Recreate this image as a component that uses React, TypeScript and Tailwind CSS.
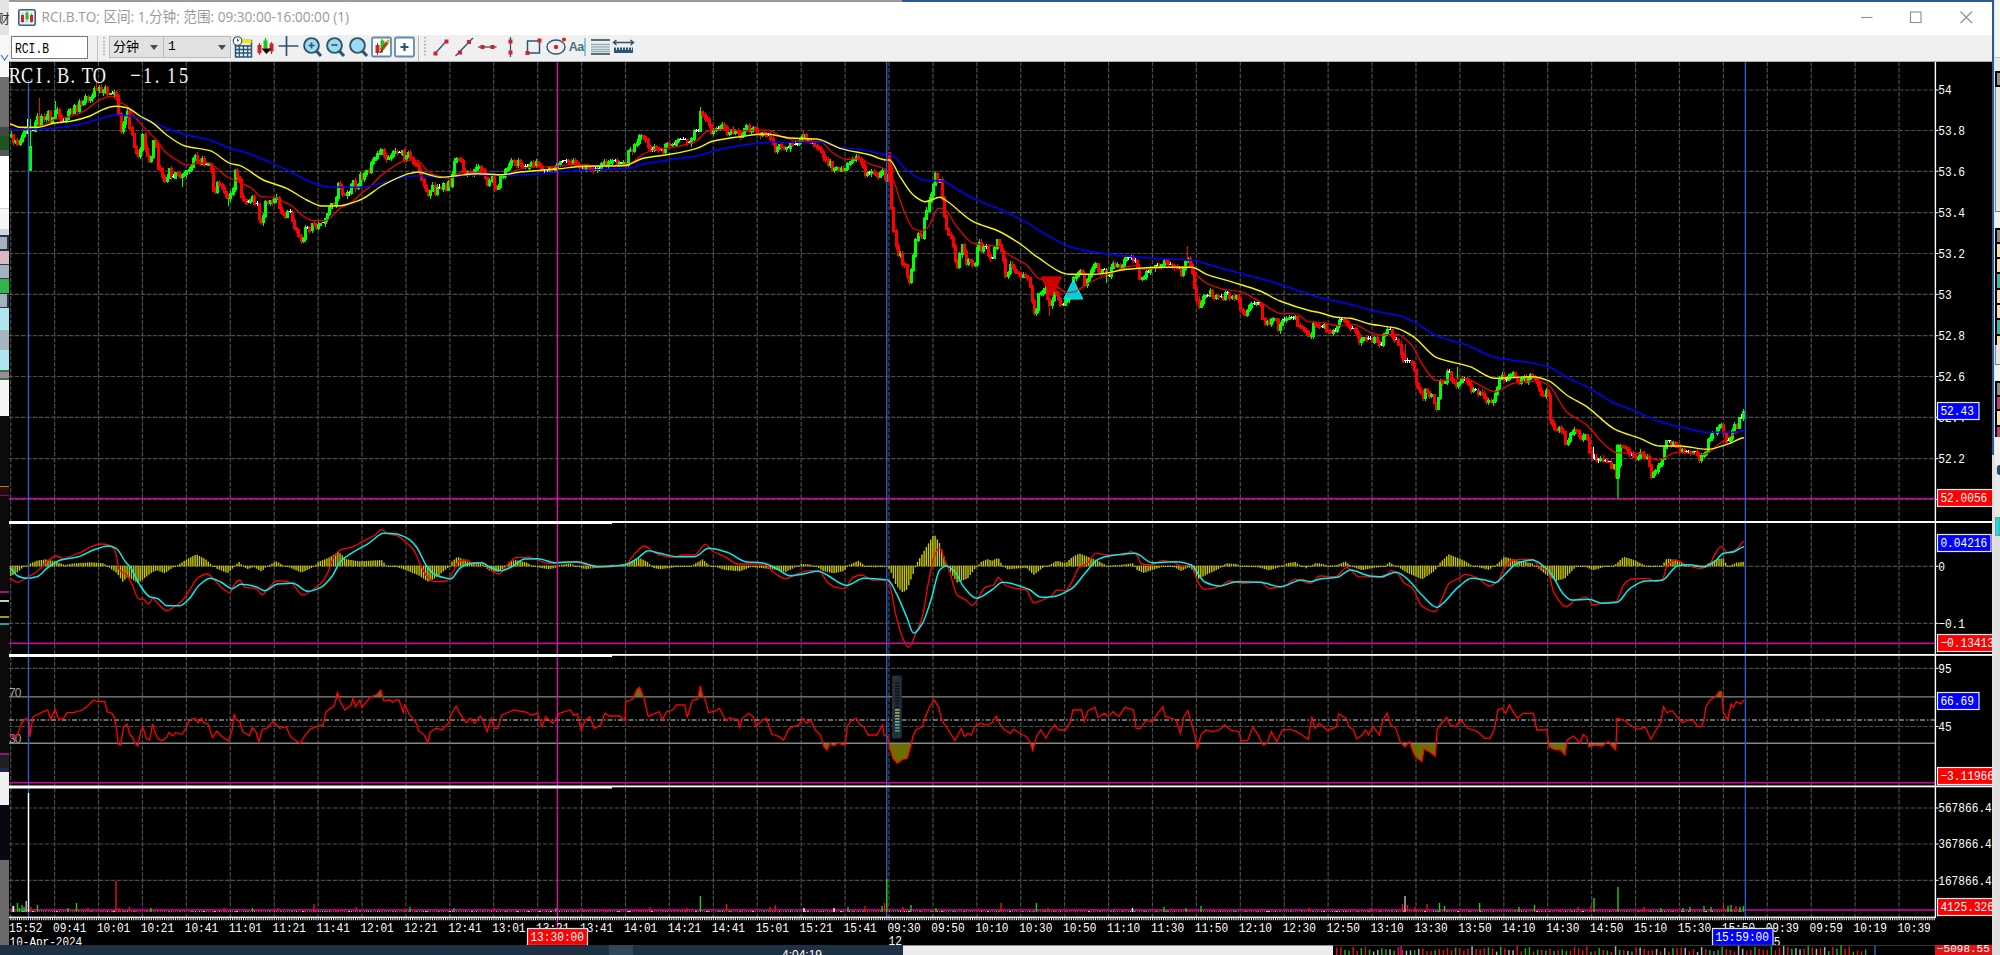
import React from "react";

type Pt = [number, number];
type Seg = [number, number, number, string];

const STEP = 2.19575;
const X0 = 10.7;
const GRID = 43.915;
const NBARS = 790;

const round = (n: number) => Math.round(n * 10) / 10;

function read(segs: Seg[]): Pt[] {
  const out: Pt[] = [];
  for (const [ox, oy, kx, data] of segs) {
    for (const pair of data.trim().split(/\s+/)) {
      const [a, b] = pair.split(",").map(Number);
      const x = ox + a / kx;
      if (out.length && x <= out[out.length - 1][0]) continue;
      out.push([x, oy + b / 3]);
    }
  }
  return out;
}

function sampler(pts: Pt[]) {
  return (x: number) => {
    if (x <= pts[0][0]) return pts[0][1];
    for (let i = 1; i < pts.length; i++) {
      if (x <= pts[i][0]) {
        const [xa, ya] = pts[i - 1];
        const [xb, yb] = pts[i];
        return ya + ((yb - ya) * (x - xa)) / (xb - xa);
      }
    }
    return pts[pts.length - 1][1];
  };
}

function noise(seed: number) {
  let s = seed;
  return () => {
    s = (s * 1664525 + 1013904223) % 4294967296;
    return s / 4294967296;
  };
}

const toPoints = (pts: Pt[]) => pts.map((p) => `${round(p[0])},${round(p[1])}`).join(" ");

function toCurve(pts: Pt[]) {
  const n = pts.length;
  const slope = pts.map((p, i) => {
    if (i === 0 || i === n - 1) return 0;
    const a = (p[1] - pts[i - 1][1]) / (p[0] - pts[i - 1][0]);
    const b = (pts[i + 1][1] - p[1]) / (pts[i + 1][0] - p[0]);
    return a * b <= 0 ? 0 : (2 * a * b) / (a + b);
  });
  let d = `M${round(pts[0][0])} ${round(pts[0][1])}`;
  for (let i = 1; i < n; i++) {
    const [xa, ya] = pts[i - 1];
    const [xb, yb] = pts[i];
    const t = (xb - xa) / 3;
    d += `C${round(xa + t)} ${round(ya + slope[i - 1] * t)} ${round(xb - t)} ${round(yb - slope[i] * t)} ${round(xb)} ${round(yb)}`;
  }
  return d;
}

const price = read([
  [0, 60, 3, "30,215 35,240 50,245 62,240 66,220 78,205 88,200 97,215 103,190 112,165 118,195 125,165 133,185 145,155 152,190 160,165 166,140 172,150 180,180 190,180 195,175 205,145 215,160 222,130 230,155 237,125 245,135 258,105 265,120 277,100 285,85 292,80 300,90 315,85 322,100 333,105 343,97 352,120 358,205 364,215 370,185 380,150 386,190 392,220 398,225 402,270 410,275 418,290 424,250 430,210 435,285 442,288 452,305 458,235 465,240 470,305 475,330 483,332 488,360 496,365 505,325 512,345 520,350 527,335 540,345 548,350 556,325 566,330 575,315 580,285 590,290 597,318 605,293 615,315 630,310 638,385 645,395 652,360 660,385 672,395 680,410 686,415 697,385 705,328 712,350 720,355 722,403 735,425 745,430 755,400 762,430 772,430 777,487 788,480 795,430 805,420 815,425 828,412 835,440 845,455 855,470 865,440 873,470 880,500 890,515 900,535 908,538 915,500 927,510 937,485 947,505 957,485 970,490 978,470 985,440 992,430 1000,430 1008,405 1013,365 1022,380 1030,405 1037,405 1048,395 1057,355 1066,380 1075,365 1082,330 1088,365 1095,335 1105,330 1113,308 1120,300 1128,295 1135,275 1147,268 1155,295 1165,295 1175,278 1185,278 1205,275 1213,300 1222,265 1230,290 1240,310 1253,318 1260,350 1270,375 1280,395 1287,405 1295,372 1303,400 1312,370 1320,390 1330,375 1337,390 1345,360 1350,380"],
  [440, 60, 3, "0,382 8,365 15,385 25,390 30,360 38,330 45,292 52,295 60,300 68,315 70,340 85,338 95,340 105,330 115,322 125,335 133,330 137,370 145,380 152,345 158,335 162,385 168,390 175,380 180,345 190,345 195,322 207,315 215,305 225,315 235,305 247,318 260,325 270,300 278,318 285,308 295,315 305,335 315,325 330,325 340,330 350,310 365,305 378,302 390,310 400,300 410,312 425,325 440,315 455,325 470,330 480,320 490,310 500,312 515,305 530,310 545,312 558,310 563,275 575,270 585,250 592,240 597,222 605,228 612,230 620,250 628,270 635,272 645,260 652,270 660,260 668,272 678,250 690,255 702,255 712,242 725,235 733,235 740,252 752,240 762,212 775,208 781,155 788,160 795,180 805,185 812,225 820,205 832,205 845,188 852,205 860,220 870,210 885,215 895,225 903,235 908,212 918,200 928,210 940,198 950,212 958,230 968,220 980,225 988,220 997,245 1003,270 1012,255 1025,265 1038,268 1047,260 1052,248 1065,255 1078,242 1090,225 1097,240 1115,245 1125,260 1140,262 1147,285 1155,300 1162,315 1168,300 1175,325 1185,330 1200,325 1218,330 1225,300 1238,297 1250,285 1258,292 1263,315 1272,325 1275,340 1290,335 1305,342 1315,348 1325,325 1335,355 1340,350 1344,280 1350,365"],
  [880, 120, 3, "33,260 38,310 42,345 47,375 52,410 60,400 68,440 75,435 80,475 87,485 92,450 98,440 100,390 108,355 115,335 125,355 130,330 133,290 140,265 147,240 155,220 160,190 166,155 173,185 180,180 185,225 190,275 195,310 205,345 215,350 222,400 230,450 237,405 245,370 252,400 258,430 267,405 275,440 283,435 288,385 297,370 305,390 315,370 325,410 338,410 343,380 352,355 358,380 368,400 373,465 382,460 390,435 400,445 410,455 420,465 435,465 445,480 452,515 460,575 468,575 473,520 482,515 495,505 503,540 510,565 517,520 527,515 537,540 545,560 552,545 562,535 575,500 582,470 590,460 600,450 608,465 615,500 623,470 635,450 648,425 655,460 668,440 678,470 688,460 697,430 710,435 725,440 735,415 745,412 760,422 770,425 775,470 785,470 792,470 798,450 810,450 825,440 840,435 850,425 862,430 872,430 883,445 895,445 905,465 915,430 922,415 930,430 938,470 945,510 952,550 958,570 965,535 975,525 990,515 1000,540 1010,520 1025,535 1038,515 1050,530 1062,530 1075,535 1082,570 1090,578 1100,575 1108,555 1120,555 1130,548 1140,555 1147,590 1153,608 1165,605 1175,600 1182,585 1193,625 1203,605 1215,600 1230,595 1245,590 1255,620 1265,625 1275,635 1283,645 1295,645 1300,595 1308,620 1318,615 1330,615 1340,635 1350,638 1362,635 1372,620"],
  [1320, 220, 3, "55,305 65,298 75,300 88,320 100,330 107,330 113,365 125,355 138,352 148,355 155,370 162,345 170,370 185,368 190,345 205,325 215,345 222,358 232,350 240,395 250,425 262,425 275,430 282,455 288,495 298,508 307,535 315,510 325,520 335,530 345,560 352,560 357,480 365,490 372,490 380,455 388,460 397,485 405,495 415,480 425,475 435,475 443,490 450,510 465,510 475,520 485,520 495,540 510,548 520,535 530,510 540,465 555,475 568,475 577,450 585,475 597,490 605,468 618,480 630,465 642,475 650,485 658,515 670,525 680,505 685,545 690,600 700,620 715,625 728,630 733,655 740,680 747,640 755,640 765,625 773,640 782,660 792,645 800,645 805,680 812,715 825,715 840,715 855,720 865,720 872,735 882,740 888,775 892,775 896,680 905,680 915,685 925,695 938,705 950,715 960,700 970,710 982,715 988,740 993,765 1000,755 1010,745 1020,730 1028,715 1032,680 1040,660 1050,675 1060,670 1075,685 1088,695 1098,700 1110,695 1130,700 1138,715 1148,710 1157,695 1163,660 1172,645 1185,635 1195,620 1205,610 1212,650 1220,665 1228,665 1235,630 1243,610 1250,625 1252,590 1262,590 1270,575"],
]);

const fastMa = read([
  [0, 60, 3, "30,190 60,203 90,205 120,200 160,180 200,172 235,162 265,145 295,122 335,108 355,125 380,137 400,165 430,200 460,230 480,255 500,280 530,300 560,315 590,310 625,308 650,325 680,350 705,360 725,370 755,385 785,410 825,412 850,425 875,437 905,465 940,482 975,482 1000,465 1020,445 1050,430 1085,400 1110,380 1145,345 1180,320 1220,300 1250,300 1285,335 1320,350"],
  [440, 60, 3, "30,355 55,340 85,337 130,338 160,345 200,345 230,330 265,322 345,320 400,312 480,318 550,315 580,305 605,285 640,270 700,262 765,245 800,215 830,208 900,212 960,210 990,212 1020,228 1060,240 1100,243 1140,245 1180,280 1220,298 1260,295 1290,312 1330,325 1345,335 1358,355"],
  [880, 120, 3, "60,240 75,280 100,325 125,333 145,320 175,265 190,265 230,320 280,370 310,375 360,380 380,400 440,435 475,475 520,490 560,518 585,515 625,490 680,465 765,437 790,448 850,443 930,440 945,460 980,490 1030,508 1080,515 1140,545 1200,580 1250,582 1285,605 1330,608"],
  [1320, 220, 3, "50,317 100,313 150,337 180,345 230,343 275,375 305,430 350,482 430,475 470,490 525,515 580,490 650,483 685,495 740,575 800,615 850,670 890,698 960,700 1015,720 1070,697 1150,703 1210,662 1270,632"],
]);

const midMa = read([
  [0, 60, 3, "30,193 60,202 115,202 160,190 220,182 270,168 310,148 345,139 380,143 420,168 460,190 500,225 555,258 630,272 690,310 720,317 790,360 860,385 920,420 965,438 1010,438 1080,420 1150,375 1220,343 1255,336 1290,345"],
  [440, 60, 3, "0,352 50,347 110,341 190,344 240,336 350,327 430,319 550,317 610,295 690,283 770,265 820,243 900,230 980,222 1050,234 1130,237 1200,265 1290,285 1340,300"],
  [880, 120, 3, "28,120 60,170 100,225 135,245 180,232 200,243 280,305 355,333 425,375 470,410 570,463 640,463 750,447 850,442 935,442 980,463 1060,487 1140,513 1200,543 1290,572"],
  [1320, 220, 3, "0,278 50,292 90,295 150,312 230,325 280,350 350,413 450,440 525,475 640,470 685,482 740,525 800,560 885,628 960,655 1020,678 1080,678 1160,688 1230,670 1272,653"],
]);

const slowMa = read([
  [0, 60, 3, "30,210 100,208 200,200 250,190 300,176 350,165 390,168 450,185 500,205 560,225 630,240 690,265 740,278 800,303 860,330 930,365 980,380 1080,382 1150,368 1220,350 1260,347"],
  [440, 60, 3, "0,352 100,345 200,346 350,337 450,330 560,325 610,312 700,298 770,288 830,270 910,255 990,247 1140,247 1200,262 1270,270 1340,283"],
  [880, 120, 3, "28,103 80,150 130,180 185,183 240,213 290,240 360,268 440,308 500,345 570,380 640,396 700,404 800,413 935,421 1000,438 1100,465 1180,487 1280,520"],
  [1320, 220, 3, "0,233 100,255 150,270 240,288 290,310 350,347 440,375 525,412 640,430 685,440 740,472 800,500 880,548 950,575 1020,605 1100,625 1160,637 1235,637 1272,632"],
]);

const K = 2.306;

const macd = read([
  [0, 500, K, "22,235 40,247 65,230 85,215 110,183 130,168 145,175 170,165 190,155 210,140 235,132 250,135 265,150 275,210 290,222 305,255 320,297 330,297 343,312 352,295 365,312 385,332 400,322 420,302 440,265 455,235 478,222 495,240 510,262 530,278 540,255 552,240 565,262 590,265 605,284 620,262 640,243 670,247 698,285 720,270 740,250 755,220 770,170 785,150 810,142 840,122 865,105 880,88 892,100 915,107 935,125 955,152 970,195 985,230 1000,245 1030,243 1045,215 1058,183 1075,180 1095,192 1115,187 1130,208 1150,222 1170,195 1190,173 1220,172 1240,180 1265,190 1310,184 1340,190 1380,202 1440,195 1465,160 1485,138 1510,158"],
  [660, 500, K, "0,165 30,172 55,165 80,165 105,133 120,152 150,170 180,192 240,192 260,215 290,236 315,222 345,212 370,217 385,245 405,262 427,265 445,232 465,225 490,240 525,240 545,350 560,415 573,442 590,400 605,350 620,240 632,170 645,143 655,175 668,215 685,285 705,300 720,316 735,292 750,262 770,255 780,232 795,255 820,265 845,270 862,308 885,298 905,285 915,270 935,272 950,245 965,205 985,190 1005,160 1030,165 1070,165 1085,155 1100,165 1110,192 1130,195 1160,182 1185,187 1205,200 1225,193 1240,245 1255,268 1290,260 1315,243 1345,250 1385,246 1405,265 1440,258 1465,238 1500,250"],
  [1320, 500, K, "0,228 35,230 62,203 90,230 145,232 165,212 180,222 195,250 212,262 235,318 265,335 280,300 298,250 320,235 335,223 365,235 390,258 410,243 425,205 445,180 490,178 505,200 525,212 540,280 568,320 590,298 615,292 630,315 655,308 683,305 700,255 720,237 755,235 775,245 790,238 800,198 820,180 845,195 875,205 895,200 912,160 925,140 940,157 960,148 978,125"],
]);

const signal = read([
  [0, 500, K, "22,205 40,227 60,235 85,230 110,203 140,180 180,170 220,148 250,138 268,145 290,187 300,200 320,250 345,290 365,297 385,317 415,317 435,298 460,255 485,235 510,247 535,266 555,253 590,260 610,272 640,252 675,250 710,274 740,262 765,230 785,185 810,160 850,130 885,100 910,101 940,115 960,140 985,200 1005,225 1040,236 1060,205 1080,192 1110,188 1130,202 1155,212 1180,200 1210,177 1240,176 1280,188 1330,185 1380,200 1440,195 1470,175 1495,152"],
  [660, 500, K, "0,160 40,170 80,170 112,145 155,157 200,186 235,188 270,207 300,227 330,222 365,213 385,225 430,256 470,235 525,240 545,280 570,355 585,400 605,370 625,300 645,210 660,198 680,215 700,260 730,295 765,270 790,247 850,268 880,292 905,290 950,265 980,220 1010,178 1035,168 1095,160 1135,188 1190,185 1225,195 1255,245 1290,258 1330,245 1385,247 1430,260 1480,240 1500,245"],
  [1320, 500, K, "0,237 40,232 70,210 115,228 140,230 175,217 200,235 235,285 270,322 285,308 320,260 350,235 380,240 405,248 425,225 455,190 490,180 515,198 535,225 560,280 580,300 620,298 650,310 685,307 715,265 750,243 788,241 825,197 850,194 885,200 910,185 930,160 955,155 978,140"],
]);

const histogram = read([
  [0, 500, K, "22,231 35,225 50,208 58,199 66,192 85,182 105,178 130,185 150,195 170,190 210,187 240,190 247,199 255,208 270,222 283,247 295,232 318,252 335,235 350,220 362,213 380,222 395,208 410,195 430,178 453,163 475,178 490,197 500,208 525,222 540,203 550,184 560,198 570,210 585,203 603,217 618,197 637,184 655,197 668,205 695,220 720,205 735,185 760,172 780,155 800,178 830,184 880,180 893,199 915,203 935,212 965,228 988,248 1005,235 1035,203 1042,185 1055,170 1080,186 1110,187 1120,205 1130,215 1150,218 1165,203 1175,184 1190,180 1215,188 1235,203 1265,210 1280,206 1290,195 1315,190 1335,203 1350,210 1385,204 1410,194 1430,195 1450,187 1475,174 1495,187 1505,205"],
  [660, 500, K, "0,210 40,203 65,203 78,193 98,178 115,197 150,212 185,216 210,203 240,207 270,212 290,218 310,205 325,192 345,193 360,200 375,215 400,222 425,215 435,195 458,182 475,200 500,204 520,199 530,210 545,260 560,280 570,270 585,220 592,190 610,150 632,102 645,130 660,190 668,215 685,250 710,237 728,205 740,186 755,177 765,182 780,173 790,197 800,210 830,207 845,205 862,227 885,203 905,190 915,182 935,190 950,172 967,160 990,172 1010,182 1030,197 1060,195 1090,190 1100,212 1115,221 1145,208 1165,200 1185,203 1202,215 1220,203 1230,215 1240,240 1255,230 1290,208 1305,190 1330,192 1350,203 1380,204 1405,213 1430,203 1445,190 1465,186 1490,207 1510,190"],
  [1320, 500, K, "0,190 20,197 40,195 58,184 80,205 97,213 125,205 145,203 160,186 180,203 200,220 235,240 265,215 275,190 297,163 330,180 355,200 390,212 410,190 425,170 450,180 490,190 500,203 520,225 545,245 565,237 590,203 610,201 630,213 655,203 680,195 700,170 725,180 760,203 785,203 800,175 825,182 850,200 880,205 895,190 915,178 930,175 940,200 960,188 978,185"],
]);

const rsi = read([
  [0, 500, K, "22,700 30,712 40,705 50,668 60,655 67,660 69,710 76,650 85,645 95,638 110,630 117,658 127,628 135,657 145,657 155,638 170,638 190,630 205,615 215,600 225,605 242,605 247,635 258,640 265,655 273,732 278,735 285,680 293,672 300,705 305,710 311,730 318,738 325,692 330,682 337,715 345,720 352,672 358,700 365,718 375,722 385,710 390,697 397,707 405,698 420,703 430,682 437,660 450,655 457,668 465,655 470,668 480,673 490,712 500,693 512,710 527,722 535,692 540,642 545,660 552,662 560,695 575,707 582,683 590,695 597,725 605,688 615,685 630,665 645,685 660,680 670,710 685,725 693,730 700,712 715,688 730,680 745,675 752,635 770,618 775,598 778,575 785,605 795,630 810,615 814,595 820,620 830,600 835,622 845,605 855,590 868,585 878,570 885,602 900,600 905,607 912,600 920,600 930,637 933,615 945,645 960,670 965,692 978,705 987,728 992,697 1005,685 1020,690 1035,668 1040,645 1052,618 1060,640 1075,668 1085,655 1095,670 1107,648 1113,658 1123,695 1133,655 1140,685 1148,685 1157,645 1185,630 1215,637 1225,645 1240,640 1250,680 1258,650 1275,670 1290,640 1315,630 1322,645 1332,642 1340,690 1350,660 1360,650 1370,685 1385,675 1395,640 1405,648 1430,648 1437,660 1441,660 1443,605 1460,597 1468,570 1475,562 1485,595 1495,650 1510,640 1520,635"],
  [660, 500, K, "0,640 5,660 15,635 30,630 38,615 57,615 63,652 75,600 87,598 93,558 98,585 105,602 112,638 130,632 137,625 152,663 160,653 180,660 183,685 190,655 205,640 215,650 222,680 235,662 245,655 258,703 275,710 285,720 297,688 307,680 320,675 330,655 338,670 348,660 358,690 370,705 378,740 385,750 392,730 400,738 410,730 427,735 432,680 440,662 453,655 462,675 470,680 480,705 500,705 513,675 517,705 525,710 530,745 537,775 547,790 560,778 570,775 578,740 583,710 590,690 605,680 612,650 622,620 632,600 643,622 650,662 665,690 680,722 695,685 702,710 710,700 718,705 725,680 740,670 752,675 765,670 775,648 785,675 795,690 808,700 815,688 830,700 845,710 853,725 860,752 868,710 878,690 890,715 900,690 910,675 920,690 935,690 947,665 952,630 972,630 978,665 987,632 1003,622 1010,652 1025,640 1033,650 1045,635 1058,650 1072,622 1092,630 1098,685 1108,685 1120,662 1135,665 1148,640 1160,620 1165,650 1180,655 1190,660 1200,700 1208,650 1217,632 1230,690 1240,745 1247,705 1258,690 1275,695 1290,690 1302,675 1315,690 1335,695 1340,722 1355,722 1367,682 1380,705 1390,735 1400,730 1410,695 1422,725 1435,690 1455,688 1475,700 1495,718 1503,650 1510,685 1520,670"],
  [1320, 500, K, "0,672 18,692 38,680 43,642 60,655 67,680 77,690 85,717 97,705 105,690 112,705 122,680 137,705 145,660 155,640 163,675 175,685 185,725 195,740 207,725 213,750 220,770 235,785 240,747 252,755 266,768 270,690 277,675 292,652 300,675 312,680 325,660 340,685 355,690 365,697 380,715 392,715 402,690 410,630 420,625 428,640 437,615 445,635 455,655 468,640 492,640 500,690 515,690 523,688 528,740 540,748 555,750 565,765 570,720 585,708 600,730 607,703 615,712 620,740 635,735 650,738 665,725 675,740 682,750 685,655 700,660 715,675 732,688 750,682 763,717 775,690 785,670 792,620 800,638 812,632 835,668 850,660 862,662 870,680 880,680 885,660 890,620 900,600 912,590 920,575 926,575 930,635 940,660 948,612 953,622 960,605 970,612 978,600"],
]);

const UP = "#00ff00";
const DOWN = "#ff0000";
const FLAT = "#ffffff";

function buildCandles() {
  const at = sampler(price);
  const rnd = noise(7);
  const list: { x: number; top: number; h: number; hi: number; lo: number; c: string }[] = [];
  let prev = at(X0);
  for (let i = 0; i < NBARS; i++) {
    const x = X0 + i * STEP;
    const close = at(x) + (rnd() - 0.5) * 3.6;
    const diff = close - prev;
    const c = Math.abs(diff) < 0.62 ? FLAT : diff < 0 ? UP : DOWN;
    const top = Math.min(prev, close) - 0.5;
    const h = Math.max(1, Math.abs(diff) + (c === FLAT ? 0.5 : 2));
    list.push({ x, top, h, hi: top - rnd() * 2.6, lo: top + h + rnd() * 2.6, c });
    prev = close;
  }
  return list;
}

const candles = buildCandles();

const wicks: [number, number, number, string, number][] = [
  [30.5, 119, 171, UP, 1],
  [30.5, 146, 171, UP, 3],
  [39.3, 98, 128, DOWN, 1],
  [27, 119, 134, FLAT, 1],
  [96.8, 81, 90, DOWN, 1],
  [55, 101, 112, UP, 1],
  [182.4, 175, 187, UP, 1],
  [228.4, 198, 206, UP, 1],
  [700.4, 107, 131, UP, 1],
  [700.4, 112, 131, UP, 2],
  [803.3, 130, 142, DOWN, 1],
  [494, 180, 192, DOWN, 1],
  [889, 152, 182, DOWN, 3],
  [1049.3, 300, 316, DOWN, 1],
  [1187.5, 246, 262, DOWN, 1],
  [1106.7, 268, 283, UP, 1],
  [1405, 344, 360, DOWN, 1],
  [1593.5, 447, 459, FLAT, 1],
  [1617.7, 444, 498, "#00a000", 2],
  [1617.7, 445, 479, UP, 3],
  [1457.5, 367, 378, UP, 1],
];

const volumes: [number, number, string][] = [
  [12.5, 906, "#22cc11"], [13.5, 906, "#ffffff"], [17.5, 903, "#22cc11"], [19.5, 908, "#22cc11"], [22, 905, "#22cc11"], [24, 907, "#22cc11"], [26.2, 901, "#bbbbbb"],
  [28.5, 793, "#ffffff"], [31, 907, "#ee1111"], [37.5, 905, "#22cc11"], [68, 908, "#22cc11"], [76.5, 903, "#22cc11"], [88, 908, "#ee1111"], [116, 881, "#ee1111"],
  [119, 908, "#ee1111"], [129.5, 907, "#ee1111"], [151, 908, "#22cc11"], [224, 908, "#ee1111"], [252.5, 908, "#22cc11"], [278, 908, "#ee1111"], [314, 904, "#ee1111"],
  [356, 907, "#ee1111"], [410, 907, "#22cc11"], [454, 908, "#22cc11"], [494, 908, "#ee1111"], [556, 908, "#22cc11"], [582, 908, "#ee1111"],
  [650, 907, "#ee1111"], [687, 908, "#ee1111"], [700.4, 896, "#22cc11"], [726.5, 904, "#ee1111"], [770, 907, "#ee1111"], [775.5, 905, "#ee1111"], [804, 908, "#ffffff"],
  [834, 908, "#ffffff"], [848, 907, "#22cc11"], [865, 906, "#ee1111"], [882, 906, "#22cc11"], [884.5, 903, "#ee1111"], [886.7, 879, "#22cc11"], [903, 907, "#ee1111"],
  [911, 905, "#22cc11"], [936, 908, "#22cc11"], [1001, 903, "#ee1111"], [1036.4, 903, "#22cc11"], [1048, 908, "#ee1111"], [1132.5, 908, "#ffffff"], [1164, 907, "#22cc11"],
  [1186, 908, "#22cc11"], [1201, 906, "#22cc11"], [1309, 908, "#ee1111"], [1371, 908, "#ee1111"], [1402.5, 904, "#ee1111"], [1405, 896, "#bbbbbb"], [1407.5, 905, "#ee1111"],
  [1415, 907, "#ee1111"], [1427, 904, "#ee1111"], [1439.5, 903, "#22cc11"], [1444.5, 906, "#22cc11"], [1479.6, 903, "#22cc11"], [1519, 907, "#22cc11"], [1534.5, 905, "#22cc11"],
  [1578, 907, "#ee1111"], [1591, 906, "#ee1111"], [1594, 898, "#22cc11"], [1618, 887, "#22cc11"], [1644, 907, "#ee1111"], [1661, 908, "#22cc11"], [1683, 908, "#22cc11"],
  [1690, 907, "#22cc11"], [1704, 906, "#22cc11"], [1711, 907, "#22cc11"], [1723.5, 905, "#ee1111"], [1728, 906, "#22cc11"], [1731, 905, "#22cc11"], [1736, 906, "#ee1111"], [1740, 907, "#22cc11"], [1743.5, 906, "#22cc11"],
];

const priceLevels: [string, number][] = [
  ["54", 90], ["53.8", 130.5], ["53.6", 171.3], ["53.4", 212.7], ["53.2", 253.5], ["53", 294.3], ["52.8", 335.7], ["52.6", 376.5], ["52.4", 417.3], ["52.2", 458.7], ["", 499.3],
];
const macdLevels: [string, number][] = [["0", 566.3], ["−0.1", 623.3]];
const rsiLevels: [string, number][] = [["95", 668.3], ["45", 726.5]];
const volLevels: [string, number][] = [["567866.4", 808], ["367866.4", 844], ["167866.4", 880.3]];
const levels = [...priceLevels, ...macdLevels, ...rsiLevels, ...volLevels];

const clock = (m: number) => `${String(Math.floor(m / 60)).padStart(2, "0")}:${String(m % 60).padStart(2, "0")}`;
const times = ["15:52"];
for (let m = 581; m <= 941; m += 20) times.push(clock(m));
for (let m = 570; m <= 950; m += 20) times.push(clock(m));
for (let m = 579; m <= 639; m += 20) times.push(clock(m));

function Cells({ x, y, text, fill = "#ffffff", cell = 6.7 }: { x: number; y: number; text: string; fill?: string; cell?: number }) {
  return (
    <text x={x} y={y} fill={fill} fontSize={13.4} fontFamily="'Liberation Mono', monospace" textLength={round(text.length * cell)} lengthAdjust="spacingAndGlyphs">
      {text}
    </text>
  );
}

function Tag({ x, y, w, h = 17, fill, text }: { x: number; y: number; w: number; h?: number; fill: string; text: string }) {
  return (
    <g>
      <rect x={x + 0.5} y={y + 0.5} width={w} height={h} fill={fill} stroke="#e8e8f4" strokeWidth={1.2} />
      <Cells x={x + 3.4} y={y + 13} text={text} fill="#ffffff" />
    </g>
  );
}

function Header() {
  const text = "RCI.B.TO  −1.15";
  const s = 0.78;
  const offset = (ch: string) => (ch === "." ? -2.5 : 0);
  return (
    <text transform={`scale(${s} 1)`} y={83.5} x={text.split("").map((ch, i) => round((15 + i * 12.05 + offset(ch)) / s)).join(" ")} textAnchor="middle" fill="#f4f4f4" fontSize={23.5} fontFamily="'Liberation Serif', serif" xmlSpace="preserve">
      {text}
    </text>
  );
}

function Chart() {
  const hist = sampler(histogram);
  const rnd = noise(31);
  const bars = Array.from({ length: NBARS }, (_, i) => X0 + i * STEP);
  const area = (base: number) => `${round(rsi[0][0])},${base} ${toPoints(rsi)} ${round(rsi[rsi.length - 1][0])},${base}`;
  return (
    <svg className="block h-[883px] w-[1983px] bg-black" viewBox="9 62 1983 883">
      <defs>
        <clipPath id="over"><rect x="9" y="656" width="1926" height="40.7" /></clipPath>
        <clipPath id="under"><rect x="9" y="743.3" width="1926" height="42" /></clipPath>
      </defs>

      <g stroke="#4c4c4c" strokeWidth="1.2" strokeDasharray="4.4 1.6">
        {Array.from({ length: 44 }, (_, i) => (
          <line key={i} x1={X0 + i * GRID} x2={X0 + i * GRID} y1="62" y2="917" />
        ))}
        {levels.map(([, y]) => (
          <line key={y} x1="9" x2="1935" y1={y} y2={y} />
        ))}
      </g>

      <g shapeRendering="crispEdges">
        {candles.map((c, i) => (
          <g key={i} fill={c.c}>
            <rect x={round(c.x)} y={round(c.hi)} width="1" height={round(c.lo - c.hi)} />
            <rect x={round(c.x - 1)} y={round(c.top)} width="3" height={round(c.h)} />
          </g>
        ))}
        {wicks.map(([x, a, b, c, w], i) => (
          <rect key={i} x={x - w / 2} y={a} width={w} height={b - a} fill={c} />
        ))}
      </g>

      <g fill="none" strokeLinejoin="round">
        <path d={toCurve(fastMa)} stroke="#f00000" strokeWidth="1.25" />
        <path d={toCurve(slowMa)} stroke="#0000ff" strokeWidth="1.5" />
        <path d={toCurve(midMa)} stroke="#f6f600" strokeWidth="1.4" />
      </g>
      <path d="M1041.3 277h20l-9 18.500h-1.500z" fill="#d00000" stroke="#f00000" />
      <path d="M1073.300 280l9.500 19h-19z" fill="#00d0d8" stroke="#00f4f4" />
      <polyline points="1053,286 1060,289 1066.700,292.700 1075,291.700 1084,286" fill="none" stroke="#f00000" />

      <g fill="#c8c800">
        {bars.map((x, i) => {
          const y = hist(x);
          const zero = 566.3;
          return <rect key={i} x={round(x - 0.7)} y={round(Math.min(y, zero - 0.7))} width="1.4" height={round(Math.max(1.4, Math.abs(zero - y)))} />;
        })}
      </g>
      <g fill="none">
        <path d={toCurve(macd)} stroke="#ff0000" strokeWidth="1.3" />
        <path d={toCurve(signal)} stroke="#00f0f0" strokeWidth="1.5" />
      </g>

      <polygon points={area(696.7)} fill="#6e6e00" clipPath="url(#over)" />
      <polygon points={area(743.3)} fill="#6e6e00" clipPath="url(#under)" />
      <line x1="9" x2="1935" y1="720" y2="720" stroke="#8c8c8c" strokeWidth="1.5" strokeDasharray="5 2 1.500 2" />
      <line x1="9" x2="1935" y1="696.900" y2="696.900" stroke="#868686" strokeWidth="1.4" />
      <line x1="9" x2="1935" y1="743.200" y2="743.200" stroke="#868686" strokeWidth="1.4" />
      <g fill="#a4a4a4" fontSize="12" fontFamily="'Liberation Sans', sans-serif">
        <text x="9" y="696.500" textLength="12.500">70</text>
        <text x="9" y="742.500" textLength="12.500">30</text>
      </g>
      <polyline points={toPoints(rsi)} fill="none" stroke="#ff0000" strokeWidth="1.3" />

      <g shapeRendering="crispEdges">
        {bars.map((x, i) => {
          const r = rnd();
          const c = r < 0.42 ? "#ee1111" : r < 0.84 ? "#22aa11" : "#bbbbbb";
          const h = rnd() < 0.12 ? 3 : 1.6;
          return <rect key={i} x={round(x - 0.5)} y={912 - h} width="1.3" height={h} fill={c} />;
        })}
      </g>

      <g stroke="#d000a4" strokeWidth="1.5">
        <line x1="9" x2="1935" y1="498.400" y2="498.400" />
        <line x1="9" x2="1935" y1="643.300" y2="643.300" />
        <line x1="9" x2="1935" y1="782.700" y2="782.700" />
        <line x1="9" x2="1935" y1="910" y2="910" strokeWidth="2" stroke="#a80084" />
      </g>
      <g stroke="#2f5bc8" strokeWidth="1.4">
        <line x1="28.500" x2="28.500" y1="80" y2="917" />
        <line x1="886.700" x2="886.700" y1="62" y2="917" />
        <line x1="1745.400" x2="1745.400" y1="62" y2="917" />
      </g>
      {volumes.map(([x, y, c], i) => (
        <rect key={i} x={round(x - 0.7)} y={y} width="1.4" height={912 - y} fill={c} />
      ))}
      <rect x="28" y="793" width="1" height="119" fill="#ffffff" />
      <line x1="557.400" x2="557.400" y1="62" y2="930" stroke="#ee00bb" strokeWidth="1.3" />

      <g fill="#ffffff">
        <rect x="9" y="521" width="603" height="3" /><rect x="612" y="521" width="1380" height="2" />
        <rect x="9" y="654" width="603" height="3" /><rect x="612" y="654" width="1380" height="1.800" />
        <rect x="9" y="785.500" width="603" height="3" /><rect x="612" y="785.500" width="1380" height="1.800" />
        <rect x="1934.700" y="62" width="1.400" height="855" />
        <rect x="9" y="916.600" width="1927" height="1.300" />
      </g>
      <line x1="9" x2="1935" y1="919" y2="919" stroke="#e4e4e4" strokeWidth="2.600" strokeDasharray="1.200 0.99575" strokeDashoffset="-1.200" />

      {levels.map(([label, y]) => (
        <g key={`${label}${y}`}>
          <line x1="1935" x2="1938.500" y1={y} y2={y} stroke="#ffffff" />
          {label && <Cells x={1938.2} y={y + 4.2} text={label} />}
        </g>
      ))}
      {times.map((t, i) => (
        <Cells key={i} x={X0 + i * GRID - 1.6} y={931.5} text={t} cell={6.66} />
      ))}
      <Cells x={9.6} y={946} text="10-Apr-2024" cell={6.6} />
      <Cells x={888.5} y={945} text="12" />
      <Cells x={1767} y={945.5} text="15" />

      <Tag x={1937} y={402} w={41.500} fill="#0000ff" text="52.43" />
      <Tag x={1937} y={489} w={56} fill="#ff0000" text="52.0056" />
      <Tag x={1937} y={534} w={53.500} fill="#0000ff" text="0.04216" />
      <Tag x={1937} y={634} w={58} fill="#ff0000" text="−0.13413" />
      <Tag x={1937} y={692} w={41.500} fill="#0000ff" text="66.69" />
      <Tag x={1937} y={767} w={58} fill="#ff0000" text="−3.11966" />
      <Tag x={1937} y={898} w={58} fill="#ff0000" text="4125.326" />
      <Tag x={527} y={928} w={60} fill="#ff0000" text="13:30:00" />
      <Tag x={1712} y={928} w={60.500} fill="#0000ff" text="15:59:00" />

      <rect x="892" y="675.500" width="9.800" height="63" rx="1.500" fill="#262e3a" />
      {Array.from({ length: 17 }, (_, i) => (
        <rect key={i} x="895" y={682 + i * 3} width="4.600" height="1.700" fill={i < 9 ? "#121820" : i < 12 ? "#93a866" : i < 15 ? "#5fb084" : "#3d9a90"} />
      ))}
      <Header />
    </svg>
  );
}

const NAVY = "#2c5572";
const RED = "#d2232a";

function Icon({ children }: { children: React.ReactNode }) {
  return (
    <svg className="block h-[22px] w-[23.200px] shrink-0" viewBox="0 0 23.200 22" fill="none">
      {children}
    </svg>
  );
}

function Candles() {
  return (
    <>
      <path d="M5.500 7v12M11.500 2v12M17.500 6v12" stroke={RED} strokeWidth="1.200" />
      <rect x="3.500" y="9" width="4" height="8" fill={RED} />
      <path d="M11.500 2v12" stroke="#18c818" strokeWidth="1.200" />
      <rect x="9.500" y="4.500" width="4" height="8" fill="#18c818" />
      <rect x="15.500" y="7.500" width="4" height="8" fill={RED} />
    </>
  );
}

function Lens({ children }: { children?: React.ReactNode }) {
  return (
    <>
      <path d="M14.500 14l5.500 6" stroke={NAVY} strokeWidth="3.200" />
      <circle cx="10.500" cy="9.500" r="7.400" fill="#9bdcf2" stroke={NAVY} strokeWidth="1.900" />
      {children}
    </>
  );
}

function Grip() {
  return (
    <svg className="block h-[22px] w-[4px] shrink-0" viewBox="0 0 4 22">
      <path d="M2 1v20" stroke="#a8a8a8" strokeWidth="1.600" strokeDasharray="1.600 1.800" />
    </svg>
  );
}

function Toolbar() {
  return (
    <div className="flex h-[27px] items-start border-b border-[#a9b3b0] bg-[#f0f0f0] pl-[2px] pt-px font-['Liberation_Mono','Noto_Sans_CJK_SC',monospace] text-[12px] text-black">
      <div className="flex h-[23px] w-[77px] items-center border border-[#7a7a7a] bg-white pl-[3px]">
        <svg className="block h-[18px] w-[70px]" viewBox="0 0 70 18">
          <text x="0" y="14" fill="#000" fontSize="14" textLength="34" lengthAdjust="spacingAndGlyphs">RCI.B</text>
        </svg>
      </div>
      <div className="ml-[9px] h-[25px] w-px bg-[#c4c4c4]" />
      <div className="ml-[4px]"><Grip /></div>
      <div className="ml-[3px] flex h-[22px] w-[55px] items-center justify-between border border-[#bdbdbd] bg-[#e1e1e1] pl-[3px] pr-[5px]">
        <span className="whitespace-nowrap text-[13px] leading-none">分钟</span>
        <span className="h-0 w-0 border-x-[4.500px] border-t-[5px] border-x-transparent border-t-[#36505e]" />
      </div>
      <div className="flex h-[22px] w-[67px] items-center justify-between border border-l-0 border-[#bdbdbd] bg-[#e1e1e1] pl-[4px] pr-[4px]">
        <span className="text-[13px]">1</span>
        <span className="h-0 w-0 border-x-[4.500px] border-t-[5px] border-x-transparent border-t-[#36505e]" />
      </div>
      <div className="flex h-[22px]">
        <Icon>
          <rect x="4.500" y="4.500" width="16" height="16.500" fill="#e8eef0" stroke={NAVY} strokeWidth="1.500" />
          <rect x="10" y="3.500" width="10.500" height="3.500" fill="#f4e800" />
          <path d="M5 10h15M5 13.500h15M5 17h15M8.300 9v12M12.500 9v12M16.700 9v12" stroke={NAVY} strokeWidth="1.300" />
          <circle cx="6.500" cy="5" r="4.300" fill="#fff" stroke={NAVY} strokeWidth="1.100" />
          <path d="M6.500 2.500v2.700l2-1.500" stroke={NAVY} strokeWidth="1" />
        </Icon>
        <Icon>
          <Candles />
          <path d="M7.500 12.500h10l-5 5.500z" fill="#000" />
        </Icon>
        <Icon><path d="M1.500 10h20M9.500 0v20" stroke={NAVY} strokeWidth="1.700" /></Icon>
        <Icon><Lens><path d="M7.500 9.500h6M10.500 6.500v6" stroke={NAVY} strokeWidth="1.700" /></Lens></Icon>
        <Icon><Lens><path d="M7.500 9h6" stroke={NAVY} strokeWidth="1.700" /></Lens></Icon>
        <Icon><Lens /></Icon>
        <Icon>
          <rect x="2" y="1.500" width="19" height="19" rx="1.500" fill="#fff" stroke="#5d8ea8" strokeWidth="1.800" />
          <g transform="translate(1 0)">
            <path d="M6.500 7v12M11 3v14" stroke={RED} />
            <rect x="4.500" y="9" width="4" height="8" fill={RED} />
            <rect x="9.500" y="4.500" width="4" height="9" fill="#18c818" />
            <path d="M10 14.500l7-9" stroke="#a04c18" strokeWidth="3.200" />
            <path d="M9 16.500l2.500-2" stroke="#222" strokeWidth="1.500" />
            <path d="M16 6.500l2-2.500" stroke="#e8b030" strokeWidth="3" />
          </g>
        </Icon>
        <Icon>
          <rect x="2" y="1.500" width="19" height="19" rx="1.500" fill="#fff" stroke="#5d8ea8" strokeWidth="1.800" />
          <path d="M7.500 11h8M11.500 7v8" stroke={NAVY} strokeWidth="2.200" />
        </Icon>
      </div>
      <div className="ml-px h-[25px] w-px bg-[#b8b8b8]" />
      <div className="ml-[4px] mr-[3px]"><Grip /></div>
      <div className="flex h-[22px]">
        <Icon>
          <path d="M5.500 17l11-12" stroke={NAVY} strokeWidth="1.400" />
          <path d="M3.500 15.500h4v4h-4zM14.500 3.500h4v4h-4z" fill={RED} />
        </Icon>
        <Icon>
          <path d="M2.500 20L20 2" stroke={NAVY} strokeWidth="1.400" />
          <path d="M5 14.500h4v4H5zM14 4h4v4h-4z" fill={RED} />
        </Icon>
        <Icon>
          <path d="M2 11h18.500" stroke={NAVY} strokeWidth="1.300" />
          <path d="M4.500 9h4v4h-4zM14.500 9h4v4h-4z" fill={RED} />
        </Icon>
        <Icon>
          <path d="M11.500 1v20" stroke={NAVY} strokeWidth="1.300" />
          <path d="M9.500 3.500h4v4h-4zM9.500 14.500h4v4h-4z" fill={RED} />
        </Icon>
        <Icon>
          <rect x="5.500" y="5" width="12" height="12" stroke={NAVY} strokeWidth="1.500" />
          <path d="M15.500 2.500h4v4h-4zM3.500 15h4v4h-4z" fill={RED} />
        </Icon>
        <Icon>
          <ellipse cx="11" cy="11" rx="9" ry="7" stroke={NAVY} strokeWidth="1.400" />
          <circle cx="11" cy="11" r="2.200" fill={RED} />
          <circle cx="19" cy="3.500" r="2" fill={RED} />
        </Icon>
        <div className="flex w-[20.200px] items-center justify-start">
          <span className="border-r-2 border-[#8ac4d4] font-['Liberation_Sans',sans-serif] text-[12.500px] font-bold leading-[18px] tracking-[-0.500px] text-[#4a6f88]">Aa</span>
        </div>
        <Icon>
          <path d="M2 4h19M2 18h19" stroke="#5c6f78" strokeWidth="1.800" />
          <path d="M2 8.500h19M2 13.500h19" stroke="#8cb4bc" strokeWidth="1.600" />
          <path d="M2 11h19M2 15.700h19" stroke="#7d8c92" strokeWidth="0.900" />
        </Icon>
        <Icon>
          <path d="M2.500 6.500h18M4.500 4l-3 2.500 3 2.500M18.500 4l3 2.500-3 2.500" stroke={NAVY} strokeWidth="1.500" />
          <rect x="2" y="11.500" width="19" height="5.500" fill={NAVY} />
          <path d="M4.500 11v3M7.500 11v3M10.500 11v3M13.500 11v3M16.500 11v3M19.500 11v3" stroke="#f0f0f0" strokeWidth="0.900" />
        </Icon>
      </div>
    </div>
  );
}

function TitleBar() {
  return (
    <div className="flex h-[33px] items-center justify-between bg-white pb-[3px] pl-[9px]">
      <div className="flex items-center">
        <svg className="block h-[17px] w-[18px]" viewBox="0 0 18 17" fill="none">
          <rect x="0.800" y="0.800" width="16.400" height="15.400" rx="1.500" fill="#e9f3f7" stroke="#39657c" strokeWidth="1.600" />
          <path d="M4.500 4v10M9 1.500v12M13.500 4v10" stroke="#888" strokeWidth="0.800" />
          <rect x="3" y="6" width="3" height="7" fill={RED} />
          <rect x="7.500" y="3.500" width="3" height="7" fill="#18c818" />
          <rect x="12" y="6" width="3" height="7" fill={RED} />
        </svg>
        <svg className="ml-[5px] block h-[28px] w-[320px]" viewBox="0 0 320 28">
          <text x="0.500" y="19" fill="#999999" fontSize="14.500" fontFamily="'Open Sans', 'Noto Sans CJK SC', sans-serif" textLength="307.500" lengthAdjust="spacingAndGlyphs">
            RCI.B.TO; 区间: 1,分钟; 范围: 09:30:00-16:00:00 (1)
          </text>
        </svg>
      </div>
      <svg className="block h-[24px] w-[140px]" viewBox="0 0 140 24" fill="none" stroke="#8c8c8c" strokeWidth="1.100">
        <path d="M9 12.500h11.500" />
        <rect x="58.500" y="7" width="10.500" height="10.500" />
        <path d="M108.500 6.500l11.500 11.500M120 6.500l-11.500 11.500" />
      </svg>
    </div>
  );
}

function LeftEdge() {
  return (
    <div className="flex h-[945px] w-[9px] shrink-0 flex-col overflow-hidden bg-black">
      <div className="flex h-[35px] shrink-0 items-center overflow-hidden bg-[#e4e4e4] font-['Noto_Sans_CJK_SC',sans-serif] text-[13px] text-[#333]"><span className="-ml-[3px]">财</span></div>
      <div className="flex h-[42px] shrink-0 items-end bg-[#f8f8f8] pb-[14px]">
        <svg className="block h-[10px] w-[9px]" viewBox="0 0 9 10" fill="none"><path d="M1 2l3.500 5L8 2" stroke="#3a7ab8" strokeWidth="1.200" /></svg>
      </div>
      <div className="h-[50px] shrink-0 bg-[#6e6e6e]" />
      <div className="h-[9px] shrink-0 bg-[#474747]" />
      <div className="h-[14px] shrink-0 bg-[#1b561b]" />
      <div className="h-[6px] shrink-0 bg-[#565656]" />
      <div className="h-[53px] shrink-0 border-b border-[#d0d0d0] bg-white" />
      <div className="h-[20px] shrink-0 bg-[#f6f6f6]" />
      <div className="h-[6px] shrink-0 bg-[#c8d8e8]" />
      <div className="h-[16px] shrink-0 border-y-2 border-r-2 border-[#2a3440] bg-[#a4b2c0]" />
      <div className="h-[14px] shrink-0 border-b border-[#303840] bg-[#d8bac6]" />
      <div className="h-[14px] shrink-0 border-b border-[#303840] bg-[#a4b2c0]" />
      <div className="h-[14px] shrink-0 bg-[#2fb54a]" />
      <div className="h-[15px] shrink-0 border-y border-r-2 border-[#2a3440] bg-[#a4b2c0]" />
      <div className="h-[22px] shrink-0 bg-[#aee6f0]" />
      <div className="h-[20px] shrink-0 bg-[#a8b4c0]" />
      <div className="h-[20px] shrink-0 bg-[#aee6f0]" />
      <div className="h-[10px] shrink-0 border-y-2 border-[#2f7a4a] bg-[#a08898]" />
      <div className="h-[36px] shrink-0 bg-[#f4f4f4]" />
      <div className="h-[70px] shrink-0 bg-[#0c0c0c]" />
      <div className="h-[10px] shrink-0 border-y border-y-[#303080] border-t-[#909020] bg-[#300808]" />
      <div className="h-[95px] shrink-0 bg-[#0c0c0c]" />
      <div className="h-[2px] shrink-0 bg-[#a01080]" />
      <div className="h-[7px] shrink-0 bg-black" />
      <div className="h-[2px] shrink-0 bg-[#cccccc]" />
      <div className="h-[14px] shrink-0 bg-black" />
      <div className="h-[2px] shrink-0 bg-[#a0a000]" />
      <div className="h-[5px] shrink-0 bg-black" />
      <div className="h-[2px] shrink-0 bg-[#20a0a0]" />
      <div className="h-[128px] shrink-0 bg-[#0c0c0c]" />
      <div className="h-[2px] shrink-0 bg-[#a01080]" />
      <div className="h-[13px] shrink-0 bg-[#202020]" />
      <div className="h-[4px] shrink-0 bg-[#1c2c48]" />
      <div className="h-[33px] shrink-0 bg-[#f0f0f0]" />
      <div className="h-[55px] shrink-0 bg-[#080810]" />
      <div className="grow bg-[#6a6a6a]" />
    </div>
  );
}

function RightEdge() {
  return (
    <div className="flex h-[945px] w-[8px] shrink-0 bg-[#e2e2e2]">
      <div className="h-[455px] w-[2px] bg-[#2c5a92]" />
      <div className="flex w-[6px] flex-col overflow-hidden pl-px">
        <div className="h-[57px] shrink-0 bg-[#f4f4f4]" />
        <div className="h-[14px] shrink-0 border-t border-[#c0c0c0] bg-[#eaeaea]" />
        <div className="h-[16px] shrink-0 border-y-2 border-l-2 border-black bg-[#909090]" />
        <div className="h-[125px] shrink-0 border-b border-l border-[#808080] bg-[#e6e6e6]" />
        <div className="h-[16px] shrink-0 bg-[#f0f0f0]" />
        <div className="h-[16px] shrink-0 border-y-2 border-l-2 border-black bg-[#909090]" />
        <div className="h-[15px] shrink-0 border-b-2 border-l-2 border-black bg-[#f8dca8]" />
        <div className="h-[15px] shrink-0 border-b-2 border-l-2 border-black bg-[#f8dca8]" />
        <div className="h-[16px] shrink-0 border-b-2 border-l-2 border-black bg-[#42b8a6]" />
        <div className="h-[15px] shrink-0 border-b-2 border-l-2 border-black bg-[#f8dca8]" />
        <div className="h-[15px] shrink-0 border-b-2 border-l-2 border-black bg-[#f8dca8]" />
        <div className="h-[16px] shrink-0 border-b-2 border-l-2 border-black bg-[#42b8a6]" />
        <div className="h-[9px] shrink-0 border-l-2 border-black bg-[#f8dca8]" />
        <div className="h-[20px] shrink-0 border-b border-l border-[#808080] bg-[#e6e6e6]" />
        <div className="h-[16px] shrink-0 bg-[#f0f0f0]" />
        <div className="h-[16px] shrink-0 border-y-2 border-l-2 border-black bg-[#909090]" />
        <div className="h-[14px] shrink-0 border-b-2 border-l-2 border-black bg-[#c2407c]" />
        <div className="h-[16px] shrink-0 border-b-2 border-l-2 border-black bg-[#f8dca8]" />
        <div className="h-[10px] shrink-0 border-l-2 border-black bg-[#c2407c]" />
        <div className="h-[28px] shrink-0 bg-[#f0f0f0]" />
        <div className="ml-[2px] h-[10px] shrink-0 rounded-l-full bg-[#24507c]" />
        <div className="h-[42px] shrink-0 bg-[#e8e8e8]" />
        <div className="h-[19px] shrink-0 border border-[#909090] bg-[#00e8ee]" />
        <div className="grow bg-[#dedede]" />
      </div>
    </div>
  );
}

function BottomStrip() {
  const rnd = noise(5);
  const bars = Array.from({ length: 130 }, (_, i) => {
    const r = rnd();
    return { x: 3 + i * 4.1, h: 3 + rnd() * (i > 95 ? 7 : 6), c: r < 0.45 ? "#d01818" : r < 0.85 ? "#28a818" : "#b0b0b0" };
  });
  return (
    <div className="flex h-[10px] w-full overflow-hidden">
      <div className="flex h-[10px] w-[903px] overflow-hidden bg-[#1e3144]">
        <div className="ml-[609px] h-full w-[24px] bg-[#34465a]" />
        <div className="ml-[149px] pt-[4px] font-['Liberation_Sans',sans-serif] text-[12px] leading-[12px] text-white">4:04:19</div>
      </div>
      <div className="h-[10px] w-[430px] border-t border-[#909090] bg-[#ececec]" />
      <svg className="block h-[10px] w-[602px] bg-black" viewBox="0 0 602 10">
        <path d="M0 0.500h602" stroke="#333" />
        {bars.map((b, i) => (
          <rect key={i} x={round(b.x)} y={round(10 - b.h)} width="1.500" height={round(b.h)} fill={b.c} />
        ))}
        <path d="M68 1v9" stroke="#d000a4" strokeWidth="1.500" />
        <path d="M542 1v9" stroke="#2f5bc8" strokeWidth="1.500" />
      </svg>
      <div className="h-[10px] w-[57px] overflow-hidden whitespace-nowrap bg-[#e01414] pl-[2px] font-['Liberation_Mono',monospace] text-[11px] leading-[8px] text-white">−5098.55</div>
      <div className="h-[10px] w-[8px] bg-[#dedede]" />
    </div>
  );
}

export default function App() {
  return (
    <div className="flex h-[955px] w-[2000px] flex-col overflow-hidden bg-black">
      <div className="flex h-[945px]">
        <LeftEdge />
        <div className="flex w-[1983px] shrink-0 flex-col">
          <div className="flex h-[2px]">
            <div className="h-full w-[893px] bg-[#9a9a9a]" />
            <div className="h-full grow bg-[#2c5a92]" />
          </div>
          <TitleBar />
          <Toolbar />
          <Chart />
        </div>
        <RightEdge />
      </div>
      <BottomStrip />
    </div>
  );
}
